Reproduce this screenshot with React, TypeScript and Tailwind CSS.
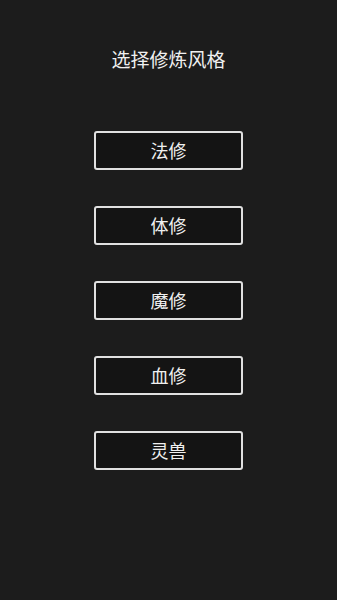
import React from 'react';

const styles = ['法修', '体修', '魔修', '血修', '灵兽'];

export default function App() {
    return (
        <div className="min-h-[600px] w-full bg-[#1c1c1c] flex flex-col items-center font-['Noto_Sans_CJK_SC',sans-serif] text-[#f0f0f0]">
            <h1 className="mt-[45px] text-[19px] leading-[27px] font-normal">选择修炼风格</h1>
            <div className="mt-[59px] flex flex-col gap-[36px]">
                {styles.map((s) => (
                    <button
                        key={s}
                        className="w-[149px] h-[39px] border-2 border-[#e0e0e0] rounded-[3px] bg-[#141414] text-[18px] text-[#f0f0f0] flex items-center justify-center"
                    >
                        {s}
                    </button>
                ))}
            </div>
        </div>
    );
}
